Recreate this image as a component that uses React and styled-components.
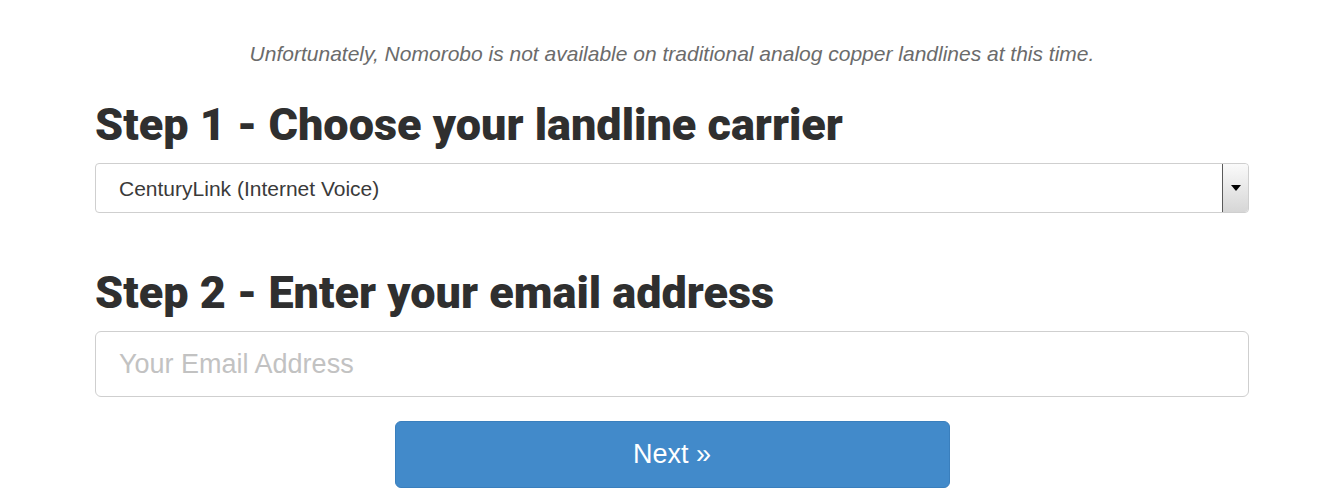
import React from 'react'
import styled, { createGlobalStyle } from 'styled-components'

const GlobalStyle = createGlobalStyle`
  html, body {
    margin: 0;
    padding: 0;
    background: #fff;
  }
  body {
    font-family: "Liberation Sans", Arial, sans-serif;
    color: #333;
  }
`

const Page = styled.div`
  padding: 39px 0 0 95px;
`

const Container = styled.div`
  width: 1154px;
`

const Notice = styled.p`
  margin: 0;
  text-align: center;
  font-size: 21px;
  line-height: 29px;
  font-style: italic;
  color: #6b6b6b;
`

const Heading = styled.h2`
  margin: ${p => p.$top}px 0 0;
  font-family: Roboto, "Liberation Sans", sans-serif;
  font-weight: 900;
  font-size: 45px;
  line-height: 48px;
  color: #2f2f2f;
`

const SelectBox = styled.div`
  margin-top: 14px;
  height: 50px;
  box-sizing: border-box;
  display: flex;
  align-items: stretch;
  border: 1px solid #cfcfcf;
  border-radius: 4px;
  background: #fff;
  overflow: hidden;
`

const Select = styled.select`
  flex: 1;
  appearance: none;
  border: 0;
  outline: none;
  background: transparent;
  padding: 0 0 0 23px;
  font-family: "Liberation Sans", Arial, sans-serif;
  font-size: 21px;
  color: #3a3a3a;
`

const ArrowButton = styled.div`
  width: 25px;
  display: flex;
  align-items: center;
  justify-content: center;
  border-left: 1px solid #5a5a5a;
  border-radius: 0 3px 3px 0;
  background: linear-gradient(#fafafa, #d6d6d6);
`

const Triangle = styled.span`
  width: 0;
  height: 0;
  border-left: 5px solid transparent;
  border-right: 5px solid transparent;
  border-top: 6px solid #000;
  margin-top: -1px;
`

const EmailInput = styled.input`
  display: block;
  margin-top: 14px;
  width: 100%;
  height: 66px;
  box-sizing: border-box;
  border: 1px solid #cfcfcf;
  border-radius: 6px;
  padding: 0 23px;
  font-family: "Liberation Sans", Arial, sans-serif;
  font-size: 27px;
  color: #333;
  outline: none;
  &::placeholder {
    color: #c2c2c2;
  }
`

const ButtonRow = styled.div`
  display: flex;
  justify-content: center;
  margin-top: 24px;
`

const NextButton = styled.button`
  width: 555px;
  height: 67px;
  border: 1px solid #3a7fbd;
  border-radius: 6px;
  background: #428aca;
  color: #fff;
  font-family: "Liberation Sans", Arial, sans-serif;
  font-size: 27px;
  cursor: pointer;
`

export default function App() {
  return (
    <>
      <GlobalStyle />
      <Page>
        <Container>
          <Notice>Unfortunately, Nomorobo is not available on traditional analog copper landlines at this time.</Notice>
          <Heading $top={33}>Step 1 - Choose your landline carrier</Heading>
          <SelectBox>
            <Select defaultValue="centurylink-voip">
              <option value="centurylink-voip">CenturyLink (Internet Voice)</option>
            </Select>
            <ArrowButton><Triangle /></ArrowButton>
          </SelectBox>
          <Heading $top={56}>Step 2 - Enter your email address</Heading>
          <EmailInput type="email" placeholder="Your Email Address" />
          <ButtonRow>
            <NextButton>Next »</NextButton>
          </ButtonRow>
        </Container>
      </Page>
    </>
  )
}
